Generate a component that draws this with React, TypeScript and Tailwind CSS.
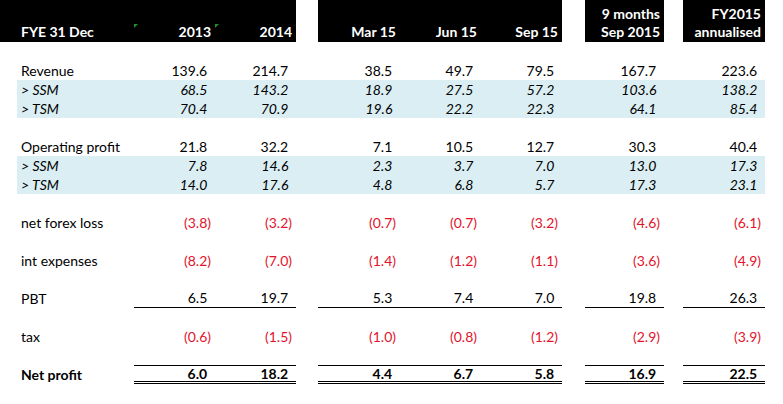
import React from "react";

type Variant = "normal" | "italic" | "bold";

type RowDef = {
  label?: string;
  values?: (number | null)[];
  variant?: Variant;
  shaded?: boolean;
  underline?: boolean;
  overline?: boolean;
  doubleUnder?: boolean;
};

const gridCols =
  "grid grid-cols-[17px_117px_81px_81px_22px_82px_81px_81px_23px_79px_19px_82px]";

// grid slots holding the 7 number columns
const numSlots = [2, 3, 5, 6, 7, 9, 11];

const rows: RowDef[] = [
  {},
  { label: "Revenue", values: [139.6, 214.7, 38.5, 49.7, 79.5, 167.7, 223.6] },
  { label: "> SSM", values: [68.5, 143.2, 18.9, 27.5, 57.2, 103.6, 138.2], variant: "italic", shaded: true },
  { label: "> TSM", values: [70.4, 70.9, 19.6, 22.2, 22.3, 64.1, 85.4], variant: "italic", shaded: true },
  {},
  { label: "Operating profit", values: [21.8, 32.2, 7.1, 10.5, 12.7, 30.3, 40.4] },
  { label: "> SSM", values: [7.8, 14.6, 2.3, 3.7, 7.0, 13.0, 17.3], variant: "italic", shaded: true },
  { label: "> TSM", values: [14.0, 17.6, 4.8, 6.8, 5.7, 17.3, 23.1], variant: "italic", shaded: true },
  {},
  { label: "net forex loss", values: [-3.8, -3.2, -0.7, -0.7, -3.2, -4.6, -6.1] },
  {},
  { label: "int expenses", values: [-8.2, -7.0, -1.4, -1.2, -1.1, -3.6, -4.9] },
  {},
  { label: "PBT", values: [6.5, 19.7, 5.3, 7.4, 7.0, 19.8, 26.3], underline: true },
  {},
  { label: "tax", values: [-0.6, -1.5, -1.0, -0.8, -1.2, -2.9, -3.9] },
  {},
  {
    label: "Net profit",
    values: [6.0, 18.2, 4.4, 6.7, 5.8, 16.9, 22.5],
    variant: "bold",
    overline: true,
    doubleUnder: true,
  },
];

const Num: React.FC<{ v: number }> = ({ v }) => {
  if (v < 0) {
    return <span className="text-[#e3132b]">({Math.abs(v).toFixed(1)})</span>;
  }
  return (
    <span>
      {v.toFixed(1)}
      <span className="invisible">)</span>
    </span>
  );
};

const DataRow: React.FC<{ row: RowDef }> = ({ row }) => {
  const textStyle =
    row.variant === "italic" ? "italic" : row.variant === "bold" ? "font-bold" : "";
  const cells: React.ReactNode[] = [];
  for (let i = 0; i < 12; i++) {
    const slot = numSlots.indexOf(i);
    let cls = "h-[19px] flex items-center";
    if (row.shaded && i > 0) cls += " bg-[#daeef3]";
    if (slot >= 0) {
      cls += " justify-end pr-[4px]";
      if (row.overline) cls += " border-t border-black";
      if (row.underline) cls += " border-b border-black";
      if (row.doubleUnder) cls += " border-b-[3px] border-double border-black";
      cells.push(
        <div key={i} className={`${cls} ${textStyle}`}>
          {row.values && row.values[slot] !== null && row.values[slot] !== undefined && (
            <Num v={row.values[slot] as number} />
          )}
        </div>
      );
    } else if (i === 1) {
      cells.push(
        <div key={i} className={`${cls} pl-[4px] whitespace-nowrap ${textStyle}`}>
          {row.label}
        </div>
      );
    } else {
      cells.push(<div key={i} className={cls} />);
    }
  }
  return <div className={gridCols}>{cells}</div>;
};

const App: React.FC = () => {
  const top: (string | null)[] = ["", "", "", "", null, "", "", "", null, "9 months", null, "FY2015"];
  const bottom: (string | null)[] = [
    "",
    "FYE 31 Dec",
    "2013",
    "2014",
    null,
    "Mar 15",
    "Jun 15",
    "Sep 15",
    null,
    "Sep 2015",
    null,
    "annualised",
  ];

  return (
    <div className="w-[783px] h-[404px] bg-white text-black text-[14px] leading-[18px] font-['Lato',sans-serif] overflow-hidden">
      {/* ── Header ── */}
      <div className={`${gridCols} font-bold text-white`}>
        {top.map((t, i) => (
          <div
            key={i}
            className={`h-[24px] flex items-end justify-end pr-[4px] pb-[1px] ${t === null ? "bg-white" : "bg-black"}`}
          >
            {t}
          </div>
        ))}
      </div>
      <div className={`${gridCols} font-bold text-white`}>
        {bottom.map((t, i) => (
          <div
            key={i}
            className={`relative h-[18px] flex items-end pb-[1px] ${t === null ? "bg-white" : "bg-black"} ${
              i === 1 ? "justify-start pl-[4px]" : "justify-end pr-[4px]"
            }`}
          >
            {(i === 2 || i === 3) && (
              <span className="absolute left-0 top-0 w-0 h-0 border-t-[4px] border-t-[#1f8f2b] border-r-[4px] border-r-transparent" />
            )}
            {t}
          </div>
        ))}
      </div>

      {/* ── Body ── */}
      {rows.map((r, idx) => (
        <DataRow key={idx} row={r} />
      ))}
    </div>
  );
};

export default App;
